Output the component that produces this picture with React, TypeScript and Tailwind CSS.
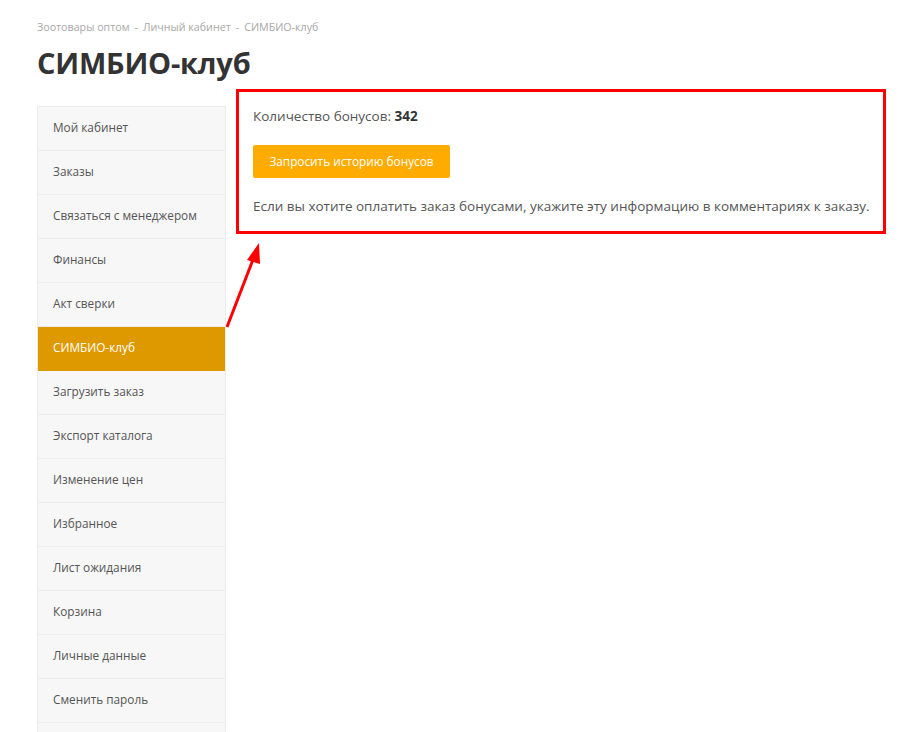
const menuItems = [
  'Мой кабинет',
  'Заказы',
  'Связаться с менеджером',
  'Финансы',
  'Акт сверки',
  'СИМБИО-клуб',
  'Загрузить заказ',
  'Экспорт каталога',
  'Изменение цен',
  'Избранное',
  'Лист ожидания',
  'Корзина',
  'Личные данные',
  'Сменить пароль',
];

const activeItem = 'СИМБИО-клуб';

export default function App() {
  return (
    <div
      className="relative min-h-[732px] bg-white pl-[37px] pt-[19px] overflow-hidden"
      style={{ fontFamily: '"Open Sans", "Liberation Sans", sans-serif' }}
    >
      {/* Breadcrumbs */}
      <div className="flex items-center gap-[5px] text-[10.7px] leading-[16px] text-[#a8a8a8]">
        <span>Зоотовары оптом</span>
        <span>-</span>
        <span>Личный кабинет</span>
        <span>-</span>
        <span>СИМБИО-клуб</span>
      </div>

      <h1 className="mt-[7px] text-[29px] leading-[42px] font-bold text-[#333] tracking-[-0.2px]">
        СИМБИО-клуб
      </h1>

      <div className="mt-[5px] flex items-start">
        {/* Sidebar menu */}
        <div className="mt-[17px] w-[189px] shrink-0 border border-[#ececec] bg-[#f7f7f7]">
          {menuItems.map((item) => (
            <div
              key={item}
              className={
                item === activeItem
                  ? 'h-[44px] flex items-center pl-[15px] pb-[1px] text-[11.8px] text-white bg-[#df9900] border-b border-[#df9900]'
                  : 'h-[44px] flex items-center pl-[15px] pb-[1px] text-[11.8px] text-[#555] border-b border-[#ececec]'
              }
            >
              {item}
            </div>
          ))}
          <div className="h-[44px]" />
        </div>

        {/* Bonus info (highlighted) */}
        <div className="ml-[10px] w-[650px] border-[3px] border-[#ff0000] pl-[14px] pt-[14px] pb-[15px]">
          <p className="text-[13.5px] leading-[20px] text-[#555]">
            Количество бонусов: <b className="text-[#333] font-bold">342</b>
          </p>
          <button className="mt-[19px] h-[33px] w-[197px] rounded-[2px] bg-[#ffab00] text-[11.8px] text-white">
            Запросить историю бонусов
          </button>
          <p className="mt-[18px] text-[13.5px] leading-[20px] text-[#555] whitespace-nowrap">
            Если вы хотите оплатить заказ бонусами, укажите эту информацию в комментариях к заказу.
          </p>
        </div>
      </div>

      {/* Annotation arrow */}
      <svg className="absolute left-0 top-0 pointer-events-none" width="922" height="732">
        <line x1="227" y1="327" x2="254" y2="257" stroke="#ff0000" strokeWidth="3" />
        <polygon points="259,243 247,260 260,264" fill="#ff0000" />
      </svg>
    </div>
  );
}
